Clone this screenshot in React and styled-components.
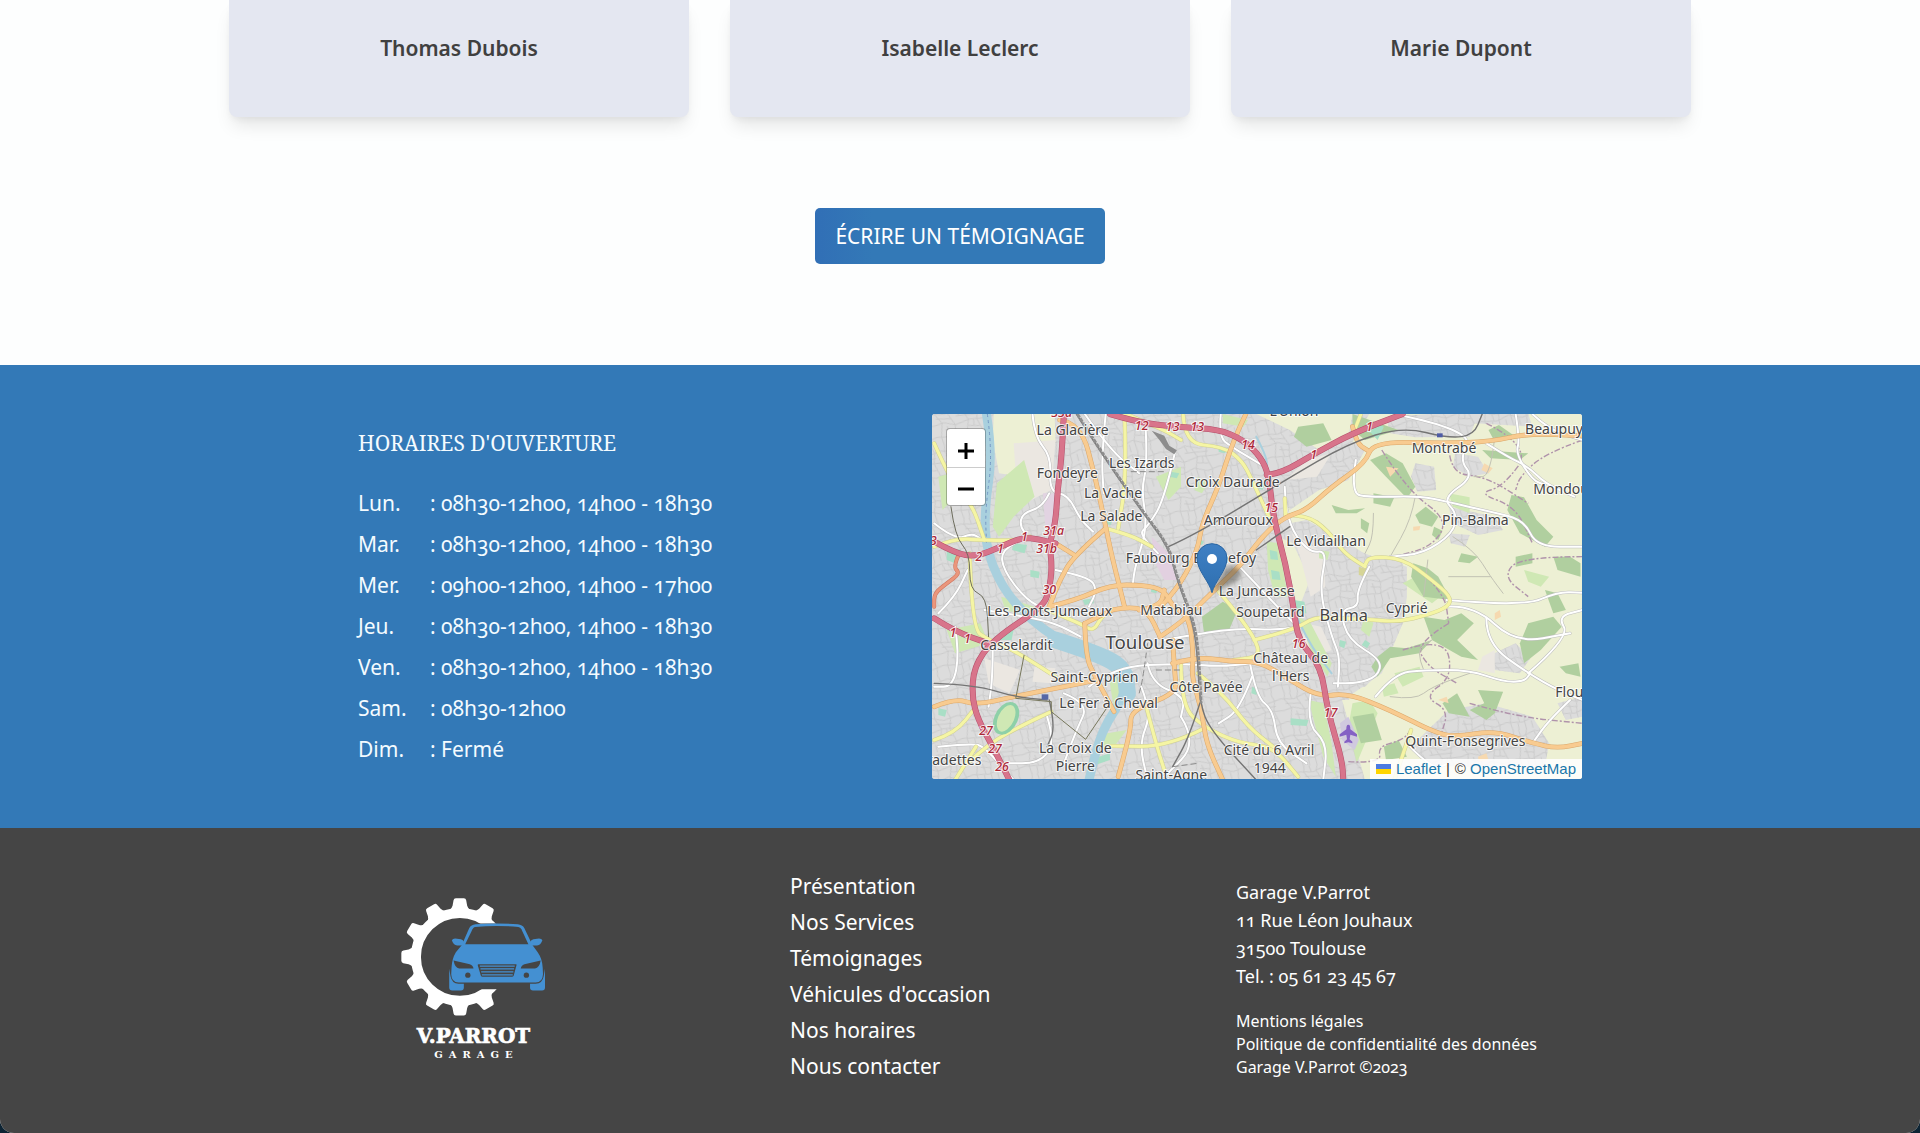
import React from "react";
import styled, { createGlobalStyle } from "styled-components";

const sans = `"Noto Sans", "Open Sans", sans-serif`;
const serif = `"Noto Serif", "Liberation Serif", serif`;
const blue = "#3379b7";

const GlobalStyle = createGlobalStyle`
  *, *::before, *::after { box-sizing: border-box; }
  body {
    margin: 0;
    background: #0d2434;
    color: #404040;
    font-family: ${sans};
    font-variant-numeric: oldstyle-nums;
  }
`;

const Page = styled.div`
  display: flex;
  flex-direction: column;
  min-height: 100vh;
  border-radius: 0 0 14px 14px;
  overflow: hidden;
  background: #fdfefe;
`;

const Testimonials = styled.section`
  display: flex;
  flex-direction: column;
  align-items: center;
  gap: 91px;
  padding: 0 24px 101px;
`;

const CardGrid = styled.div`
  display: grid;
  grid-template-columns: repeat(3, 1fr);
  gap: 41px;
  width: 100%;
  max-width: 1462px;
`;

const Card = styled.article`
  padding: 32px 24px 53px;
  border-radius: 0 0 8px 8px;
  background: #e4e7f1;
  box-shadow: 0 12px 18px -4px rgba(0, 0, 0, 0.1), 0 4px 7px -2px rgba(0, 0, 0, 0.05);
`;

const Author = styled.h3`
  margin: 0;
  font-size: 21px;
  font-weight: 600;
  line-height: 32px;
  text-align: center;
`;

const WriteButton = styled.button`
  padding: 12px 20px;
  border: 0;
  border-radius: 5px;
  background: linear-gradient(90deg, #316fb6, ${blue} 20%);
  color: #fff;
  font: 400 21px/32px ${sans};
  text-transform: uppercase;
  cursor: pointer;
`;

const HoursBand = styled.section`
  padding: 49px 24px;
  background: ${blue};
  color: #f4fbff;
`;

const HoursInner = styled.div`
  display: grid;
  grid-template-columns: 574fr 650fr;
  max-width: 1244px;
  margin: 0 auto;
  padding-left: 20px;
`;

const HoursText = styled.div`
  display: flex;
  flex-direction: column;
  gap: 24px;
  padding-top: 13px;
`;

const HoursTitle = styled.h2`
  margin: 0;
  font: 400 21px/32px ${serif};
  text-transform: uppercase;
`;

const HoursTable = styled.table`
  border-collapse: collapse;
  font-size: 21px;
  line-height: 41px;
  th, td { padding: 0; font-weight: 400; text-align: left; white-space: nowrap; }
  th { width: 72px; }
`;

const MapFrame = styled.div`
  position: relative;
  height: 365px;
  overflow: hidden;
  border-radius: 3px;
  background: #dcdcdc;
`;

const MapDrawing = styled.svg`
  display: block;
  width: 100%;
  height: 100%;
  font-family: ${sans};
  font-variant-numeric: lining-nums;
`;

const ZoomControl = styled.div`
  position: absolute;
  top: 15px;
  left: 15px;
  display: flex;
  flex-direction: column;
  border-radius: 3px;
  background: #fff;
  box-shadow: 0 0 0 1px rgba(0, 0, 0, 0.25);
`;

const ZoomButton = styled.button`
  display: grid;
  place-items: center;
  width: 38px;
  height: 38px;
  padding: 5px 0 0;
  border: 0;
  background: none;
  cursor: pointer;
  & + & { border-top: 1px solid #ccc; }
`;

const Attribution = styled.div`
  position: absolute;
  right: 0;
  bottom: 0;
  display: flex;
  align-items: center;
  gap: 5px;
  padding: 0 6px;
  background: rgba(255, 255, 255, 0.85);
  color: #333;
  font: 15px/20px "Liberation Sans", sans-serif;
  a { color: #1b77aa; text-decoration: none; }
`;

const Footer = styled.footer`
  flex: 1;
  padding: 40px 24px 48px;
  background: #454545;
  color: #fff;
`;

const FooterInner = styled.div`
  display: grid;
  grid-template-columns: 432fr 446fr 346fr;
  align-items: start;
  max-width: 1244px;
  margin: 0 auto;
  padding-left: 20px;
`;

const LogoLink = styled.a`
  justify-self: start;
  padding: 29px 0 0 42px;
  color: #fff;
  svg { display: block; width: 148px; height: 163px; }
`;

const FooterNav = styled.nav`
  display: flex;
  flex-direction: column;
  align-items: start;
  font-size: 21px;
  line-height: 36px;
`;

const FooterLink = styled.a`
  color: inherit;
  text-decoration: none;
`;

const Contact = styled.div`
  display: flex;
  flex-direction: column;
  gap: 20px;
  padding-top: 10px;
  white-space: nowrap;
`;

const Address = styled.address`
  font-size: 18px;
  font-style: normal;
  line-height: 28px;
`;

const Legal = styled.div`
  display: flex;
  flex-direction: column;
  align-items: start;
  font-size: 16px;
  line-height: 23px;
`;

/* ---------- map data, in map units ---------- */

const farmland = [
  "152,12 298,12 300,95 262,130 215,200 165,190 150,90",
  "1010,95 1050,12 1560,12 1560,1110 1060,1110 1010,900 1000,860 1080,790 1130,640 1130,450 1050,440 1000,400 900,330 860,340 850,300 930,230 1010,190",
  "832,380 905,420 905,520 880,600 862,500",
  "985,870 1060,870 1150,960 1150,1110 1040,1110",
  "780,12 1010,12 1000,80 930,120 860,60",
];
const builtUp = [
  "1090,22 1190,12 1310,12 1290,80 1160,82 1100,70",
  "1160,160 1205,170 1210,240 1165,245 1150,200",
  "1255,130 1310,140 1335,190 1290,200 1250,170",
  "1240,290 1350,320 1370,360 1310,375 1250,340",
  "1340,735 1400,700 1435,745 1410,790 1350,780",
  "1190,960 1240,900 1330,880 1440,920 1480,1000 1470,1070 1200,1070 1150,1010",
  "860,380 1000,410 1060,440 1140,470 1140,560 1130,640 1080,780 1040,830 990,840 960,740 915,620 905,500",
  "1020,100 1040,120 1000,210 930,240 860,300 850,220 900,140 980,90",
  "1290,12 1430,12 1440,50 1300,40",
  "1500,880 1560,860 1560,920 1520,930",
  "1240,370 1290,375 1280,410 1245,400",
];
const woods = [
  "1052,150 1090,130 1130,160 1160,230 1140,265 1090,200",
  "1390,255 1420,262 1450,330 1490,380 1470,410 1410,370 1380,300",
  "1155,460 1190,475 1215,500 1245,570 1180,560 1150,500",
  "1160,315 1185,290 1215,320 1200,350 1170,340",
  "1180,620 1230,630 1270,610 1300,640 1260,690 1310,750 1270,740 1200,690",
  "1055,770 1070,740 1100,710 1140,715 1200,690 1170,730 1100,745 1070,800",
  "1430,640 1490,620 1510,650 1460,720 1420,760 1410,700",
  "1310,840 1370,845 1350,910 1330,930 1290,900 1325,880",
  "1225,880 1260,850 1290,920 1240,910",
  "1010,920 1060,910 1080,990 1030,1000",
  "1010,12 1120,60 1040,90 1010,60",
  "880,50 940,40 960,90 900,110 870,80",
  "1320,120 1430,130 1410,150 1340,145",
  "650,620 700,575 735,600 715,660 655,670",
  "1400,440 1440,430 1440,460 1400,470",
  "1490,440 1530,440 1555,460 1555,500 1500,480",
  "1060,250 1110,262 1100,290 1060,280",
  "1470,540 1500,550 1520,600 1490,610",
  "1085,1010 1120,990 1140,1040 1090,1050",
  "1205,350 1225,362 1215,390 1200,375",
  "960,285 1000,300 1040,295 1020,310 970,310",
  "1030,325 1050,340 1045,370 1030,355",
  "1335,60 1360,45 1400,80 1350,95",
  "1270,430 1310,440 1290,460 1262,455",
  "1505,770 1550,760 1555,800 1520,790",
];
const meadows = [
  "160,220 225,150 250,260 200,320 165,380 150,350",
  "805,395 835,400 855,560 825,560 808,480",
  "880,620 910,640 960,760 950,800 910,720",
  "905,870 940,880 960,1000 970,1100 940,1040",
  "1010,880 1050,870 1070,910 1020,1060 1000,950",
  "540,200 600,170 600,230 570,270",
  "430,820 455,780 470,860 440,900",
  "40,660 120,640 140,700 60,730",
  "170,560 250,590 240,620 180,600",
  "400,975 470,960 440,1010 410,1020",
  "1130,520 1160,500 1220,560 1200,580",
  "1110,790 1170,770 1180,800 1130,830",
  "1240,250 1290,262 1290,310 1250,290",
  "700,12 760,30 750,50 700,40",
  "20,200 50,190 60,260 30,300",
  "1080,830 1110,820 1120,850 1085,860",
  "1420,480 1480,500 1460,530 1430,515",
  "930,420 955,425 950,450 930,445",
  "640,200 665,220 650,250 632,240",
  "1040,610 1060,640 1050,680 1030,660",
];
const pale = [
  "900,150 960,130 925,200 850,210",
  "865,370 905,400 940,430 945,530 910,560 885,440",
  "895,640 935,650 960,720 920,740 890,690",
  "130,745 215,780 190,850 140,820",
  "200,100 300,90 290,240 210,290",
  "250,770 300,775 290,820 245,815",
  "1320,740 1350,720 1350,790 1310,780",
];
const fields = [
  "1090,170 1120,175 1100,200",
  "1155,350 1172,348 1170,360 1155,362",
  "1325,160 1345,175 1335,190 1318,180",
  "1350,610 1362,600 1365,620 1350,630",
  "1310,1040 1330,1030 1335,1050 1312,1055",
  "1215,870 1235,860 1240,880",
];
const ponds = [
  "40,410 75,420 60,460 40,450",
  "812,420 830,425 832,450 814,448",
  "815,480 835,485 838,510 818,508",
  "575,185 596,190 590,205 572,200",
  "200,400 232,405 226,430 196,420",
  "165,670 200,660 195,690 165,690",
  "870,570 895,575 900,610 878,612",
  "862,925 905,930 900,948 862,945",
  "380,1050 430,1030 430,1050 395,1065",
  "240,480 262,485 260,505 240,500",
  "1040,690 1052,700 1045,715 1032,705",
  "780,215 800,225 795,240 778,232",
  "640,385 655,395 650,405 638,400",
  "365,570 390,565 392,580 370,585",
  "690,110 710,120 705,130 690,125",
  "770,830 785,840 780,855 768,850",
  "980,690 995,695 990,715 978,708",
  "420,330 435,335 432,345 420,342",
  "20,895 40,900 36,920 20,915",
  "530,530 545,540 540,550 528,545",
  "1038,60 1065,40 1085,50 1070,90 1055,70",
];
const minor = [
  "245,12 250,80 290,140 285,245 330,255 360,330 390,365",
  "285,250 270,290 220,310 215,350 235,380 170,420 175,480 230,570 280,600",
  "420,12 410,140 415,250",
  "515,40 520,160 505,240 520,350 490,470 485,520",
  "585,130 560,270 520,350 500,370 545,430",
  "695,12 690,80 720,110 800,170",
  "740,470 830,590 870,640",
  "1018,150 1005,250 1050,262 1170,258 1235,275 1340,305 1420,330 1450,410 1560,410",
  "1110,12 1300,60 1265,150 1300,200 1225,265 1260,310 1250,370 1180,430 1100,440",
  "1330,100 1380,140 1430,170 1470,220 1540,260",
  "1400,12 1410,90 1400,130 1440,210 1470,225",
  "1440,12 1480,60 1560,90",
  "848,230 850,330 905,430 950,420 930,540 960,680 980,740 975,830",
  "1050,470 1020,540 1025,590 980,600 1000,690 1080,750 1070,800 1020,820 965,820",
  "1235,590 1300,585 1400,700 1530,670",
  "1330,625 1330,700 1430,790 1500,840 1560,870",
  "1235,570 1420,590 1500,545 1560,548",
  "1430,790 1530,680 1500,620 1560,600",
  "1065,860 1110,790 1180,780 1290,780 1370,815 1420,815 1435,790",
  "1530,870 1480,930 1440,1000",
  "1140,1000 1200,1080 1240,1060",
  "130,600 230,620 300,640 360,680",
  "60,650 70,730 55,830 10,830",
  "150,700 150,800 140,890",
  "380,830 440,770 600,760 690,770 770,760",
  "520,760 530,820 610,860 600,920",
  "560,690 650,670 740,655 830,660 880,650",
  "320,850 380,880 350,960 320,1060",
  "20,1010 100,1000 130,1010 200,1110",
  "280,920 300,1000 260,1060 180,1060",
  "765,760 780,860 820,900 830,1000 900,1060",
  "770,800 740,900 690,940",
  "910,850 900,940 950,1000 940,1110",
  "505,830 530,910 500,1000 520,1110",
  "600,920 640,1000 560,1100",
  "10,340 60,390 100,370 120,385",
  "370,12 430,120 500,190",
  "20,610 60,560 90,480",
  "300,480 380,500 400,540 380,590",
];
const lanes = [
  "1060,310 1060,380 1040,430",
  "1160,260 1150,330 1100,440",
  "1190,450 1180,560",
  "1250,380 1300,420 1340,500 1370,550",
  "1100,860 1160,870 1200,830 1290,790",
  "1340,500 1240,500",
  "1180,780 1160,720 1200,690",
  "1350,80 1340,200 1300,200",
];
const yellow = [
  "605,12 608,100 700,110 745,150 770,210 810,320",
  "465,12 470,200 450,355",
  "10,410 60,385 120,390 200,392 240,380",
  "10,100 60,240 100,280 130,390",
  "420,355 480,375 530,410",
  "690,545 715,580 775,680 790,740 725,750",
  "775,690 870,660 920,620 990,625 1060,630 1120,635 1190,615 1240,590 1245,560 1200,510 1130,445 1050,440 1040,465",
  "850,315 900,315 950,360 990,430 1040,470",
  "848,265 850,315",
  "95,430 100,655 140,690 200,720 300,800",
  "280,600 360,640 390,665 410,620 435,600",
  "600,760 600,890 660,955 740,1000 820,1010 880,1100",
  "640,790 700,850 760,950 820,1010",
  "655,955 570,1010 430,1008",
  "515,880 540,1000 560,1080",
  "10,990 60,970 110,890",
  "90,1060 140,1000 230,940 290,905",
  "60,1110 110,1010",
  "1150,960 1110,1110",
  "470,12 500,30 560,60 600,90",
  "1030,12 1015,60",
];
const orange = [
  "755,12 725,90 690,230 650,340 640,420 600,520 545,600",
  "310,30 360,40 395,200 420,350 435,440 465,590",
  "420,355 345,435 310,510 285,590",
  "285,590 350,570 430,525 510,525 560,540 580,590 620,620 630,740 625,800 650,900 660,1000 700,1110",
  "435,600 470,590 520,600 550,680",
  "550,680 600,640 680,540 740,470 800,370 850,320 900,300 960,230 1040,160 1060,95 1230,100 1340,95 1430,70 1560,78",
  "1010,50 1020,100 1045,120",
  "370,640 372,740 395,800 440,905",
  "370,640 435,600",
  "10,890 60,865 110,885 200,860 320,830 400,810",
  "580,690 585,790 590,850 480,900 480,960 450,1100",
  "580,760 640,740 720,755 790,755 860,810 930,860 1000,850 1100,900 1210,970 1260,980 1350,962 1440,1000 1500,1015 1560,1000",
  "500,600 550,590 560,540",
  "300,400 345,435",
];
const motorway = [
  "320,12 315,140 305,240 300,340 285,400 292,470 285,540 270,590 150,690 105,770 100,860 115,930 150,1010 190,1110",
  "10,625 60,665 140,700",
  "10,395 60,430 110,440 170,410 220,382 260,388 300,400",
  "430,12 500,38 600,52 690,58 750,90 790,140 810,195 820,320 850,460 870,600 880,690 935,770 950,900 985,1050 988,1110",
  "805,195 840,190 920,130 1010,70 1130,12",
];
const coral = ["70,430 55,470 72,490 40,520 10,550 10,590"];
const rails = [
  "350,12 420,150 510,310 570,410 590,510 630,640 640,750 645,880 670,960 780,1110",
  "570,410 640,370 850,210 1000,100 1130,50 1240,85 1300,75 1320,12",
  "645,880 620,980 580,1070",
  "10,820 110,825 200,860 280,870",
  "285,870 300,950 280,1010",
  "780,420 860,350",
];
const tracks = ["50,290 60,380 95,430 95,540 135,560 140,680"];
const river = [
  "135,12 150,130 130,300 135,430 190,570 300,690 400,730 460,770 470,850 410,960 380,1110",
];
const canals = ["780,80 810,150 800,190", "940,820 975,1000 985,1110", "870,600 900,690 960,790"];
const borders = [
  "1330,40 1440,110 1370,230 1310,250 1400,290 1440,400",
  "1240,100 1240,190 1330,200 1430,280",
  "1080,120 1140,240 1240,330 1200,410 1110,440",
  "1560,90 1470,130 1410,200 1400,240",
  "1560,440 1410,440 1370,500 1430,560",
  "1130,720 1230,680 1250,800 1180,860 1240,900 1220,980",
  "1240,640 1160,700 1190,770 1260,820",
  "1290,880 1400,920 1560,940",
  "1000,1055 1080,1060 1070,1010 1130,990 1150,960",
  "1170,480 1230,550 1240,640",
];

const places = [
  ["La Glacière", 428, 76], ["Les Izards", 635, 174], ["Fondeyre", 412, 203],
  ["La Vache", 549, 263], ["La Salade", 544, 332], ["Croix Daurade", 908, 232],
  ["Amouroux", 925, 345], ["Le Vidailhan", 1188, 408], ["Montrabé", 1542, 130],
  ["Beaupuy", 1872, 73], ["Pin-Balma", 1636, 344], ["Faubourg Bonnefoy", 783, 458],
  ["La Juncasse", 980, 558], ["Les Ponts-Jumeaux", 359, 617], ["Matabiau", 724, 615],
  ["Soupetard", 1021, 620], ["Cyprié", 1430, 609], ["Casselardit", 259, 720],
  ["Saint-Cyprien", 493, 815], ["Le Fer à Cheval", 536, 894], ["Côte Pavée", 828, 846],
  ["Château de", 1082, 759], ["l'Hers", 1082, 814], ["La Croix de", 436, 1028],
  ["Pierre", 436, 1082], ["Cité du 6 Avril", 1017, 1034], ["1944", 1019, 1088],
  ["Saint-Agne", 724, 1110], ["Quint-Fonsegrives", 1606, 1008], ["L'Union", 1092, 19],
];
const cutPlaces = [["Mondouzil", 1810, 252], ["Flourens", 1876, 861]];
const exits = [
  ["12", 635, 60], ["13", 728, 64], ["13", 802, 64], ["14", 954, 116], ["1", 1318, 64],
  ["1", 1151, 148], ["15", 1024, 306], ["31a", 371, 376], ["31b", 350, 430], ["1", 283, 394],
  ["1", 211, 428], ["2", 147, 452], ["3", 10, 404], ["30", 358, 552], ["1", 69, 682],
  ["1", 112, 698], ["16", 1106, 715], ["17", 1202, 922], ["27", 168, 976], ["27", 195, 1030],
  ["26", 216, 1084], ["33a", 395, 22],
];

const toPath = (points) => {
  const p = points.split(" ").map((pair) => pair.split(",").map(Number));
  let d = `M${p[0]}`;
  for (let i = 1; i < p.length - 1; i++) {
    d += ` Q${p[i]} ${(p[i][0] + p[i + 1][0]) / 2},${(p[i][1] + p[i + 1][1]) / 2}`;
  }
  return `${d} L${p[p.length - 1]}`;
};

const Lines = ({ items, color, casing, width, dash }) => (
  <g fill="none" strokeLinecap={dash ? "butt" : "round"} strokeLinejoin="round">
    {casing && items.map((l) => (
      <path key={`c${l}`} d={toPath(l)} stroke={casing} strokeWidth={width + 1} vectorEffect="non-scaling-stroke" />
    ))}
    {items.map((l) => (
      <path key={l} d={toPath(l)} stroke={color} strokeWidth={width} strokeDasharray={dash} vectorEffect="non-scaling-stroke" />
    ))}
  </g>
);

const Areas = ({ items, fill, overlay }) => (
  <g>
    {items.map((a) => <polygon key={a} points={a} fill={fill} />)}
    {overlay && items.map((a) => <polygon key={`o${a}`} points={a} fill={overlay} />)}
  </g>
);

const CityMap = () => (
  <MapDrawing viewBox="6 12 1950 1095" preserveAspectRatio="xMidYMid slice" role="img" aria-label="Carte de Toulouse">
    <defs>
      <pattern id="streets" width="128" height="112" patternUnits="userSpaceOnUse" patternTransform="rotate(-12)">
        <path
          d="M0 14 L30 20 62 8 94 22 128 14 M0 50 L24 44 50 56 86 46 128 50 M0 84 L40 90 70 78 100 92 128 84 M12 0 L8 17 20 45 10 86 12 112 M44 0 L38 18 50 56 44 89 44 112 M76 0 L74 14 84 46 74 80 76 112 M108 0 L112 18 104 48 112 88 108 112 M8 30 L44 36 M56 30 L112 34 M24 66 L48 72 M80 64 L106 70 M60 90 L60 112 M92 90 L92 112 M28 90 L26 112 M24 0 L26 18 M60 10 L64 30 M96 48 L94 66 M30 56 L32 88"
          fill="none" stroke="#c6c6c6" strokeWidth="2"
        />
      </pattern>
      <linearGradient id="pin" x1="0" y1="0" x2="0" y2="1">
        <stop offset="0" stopColor="#3f80c4" />
        <stop offset="1" stopColor="#2e6fb0" />
      </linearGradient>
      <filter id="soft"><feGaussianBlur stdDeviation="7" /></filter>
    </defs>
    <g transform="scale(1.255 1)">
      <rect width="1560" height="1122" fill="#dcdcdc" />
      <rect width="1560" height="1122" fill="url(#streets)" />
      <Areas items={farmland} fill="#edf0d4" />
      <Areas items={builtUp} fill="#dcdcdc" overlay="url(#streets)" />
      <Areas items={pale} fill="#ebe7e1" />
      <Areas items={meadows} fill="#cfe8b4" />
      <Areas items={woods} fill="#b0cf9f" />
      <Areas items={fields} fill="#f6d9b0" />
      <Areas items={ponds} fill="#a9dfc6" />
      <polygon points="530,380 570,430 590,510 560,510 535,450" fill="#e2d0e0" />
      <polygon points="270,250 300,250 296,340 276,360" fill="#e2d3e2" />
      <polygon points="980,940 1000,920 1025,990 1015,1020 985,990" fill="#d0c9df" />
      <polygon points="1025,470 1050,480 1042,500 1025,495" fill="#d6d596" />
      <Lines items={river} color="#a9d0de" width={9} />
      <Lines items={["300,690 400,730 465,775 472,850"]} color="#a9d0de" width={17} />
      <Lines items={canals} color="#a9d0de" width={2} />
      <Lines items={["137,12 150,130 132,300 135,400"]} color="#7597c4" width={1} dash="3 3" />
      <Lines items={borders} color="#b093ab" width={1.4} dash="6 2 2 2" />
      <Lines items={lanes} color="#c2c2b4" width={1} />
      <Lines items={minor} color="#ffffff" casing="#bdbdbd" width={2} />
      <Lines items={yellow} color="#f5f5a4" casing="#cfcf95" width={3.2} />
      <ellipse cx="182" cy="925" rx="24" ry="46" transform="rotate(18 182 925)" fill="#cfe8b4" stroke="#8ed0a8" strokeWidth="9" />
      <Lines items={orange} color="#f8cb90" casing="#dba76a" width={3.8} />
      <Lines items={coral} color="#ea967c" casing="#cc735e" width={3} />
      <Lines items={motorway} color="#d8748b" casing="#b4506c" width={5} />
      <Lines items={rails} color="#747474" width={1.4} />
      <Lines items={["352,12 422,150 512,310 572,410 592,510 633,640 643,750 648,880"]} color="#8d8d8d" width={3} dash="4 1" />
      <Lines items={tracks} color="#6c6c5c" width={1} />
      <polyline points="225,735 215,800 205,865 290,875 290,905 372,988 430,880" fill="none" stroke="#77775c" strokeWidth="1" vectorEffect="non-scaling-stroke" />
      <Lines items={["520,700 510,800 500,850", "480,185 560,185", "540,780 600,780", "580,1070 640,1060"]} color="#8a8a8a" width={1} dash="6 3" />
      <path d="M530 62l30 15 12 30 18 14-6 12-20-16-16-28z" fill="#8d8d8d" />
    </g>
    <rect x="335" y="853" width="20" height="16" fill="#5567a6" />
    <rect x="1521" y="70" width="17" height="12" fill="#4e5ba5" />
    <path d="M1255 944c5 0 6 6 6 14l20 15v7l-20-6-2 14 8 7v5l-12-3-12 3v-5l8-7-2-14-20 6v-7l20-15c0-8 1-14 6-14z" fill="#8461c4" />
    <g textAnchor="middle" fill="#444" stroke="#fff" strokeOpacity="0.8" strokeWidth="6" strokeLinejoin="round" paintOrder="stroke" fontSize="42">
      {places.map(([name, x, y]) => <text key={name} x={x} y={y}>{name}</text>)}
      <text x="1241" y="634" fontSize="49">Balma</text>
      <text x="645" y="717" fontSize="56">Toulouse</text>
    </g>
    <g fill="#444" stroke="#fff" strokeOpacity="0.8" strokeWidth="6" paintOrder="stroke" fontSize="42">
      {cutPlaces.map(([name, x, y]) => <text key={name} x={x} y={y}>{name}</text>)}
      <text x="154" y="1066" textAnchor="end">Pradettes</text>
    </g>
    <g textAnchor="middle" fill="#ab2636" stroke="#fff" strokeOpacity="0.8" strokeWidth="6" paintOrder="stroke" fontSize="37" fontStyle="italic" fontWeight="500">
      {exits.map(([n, x, y]) => <text key={`${n}-${x}`} x={x} y={y}>{n}</text>)}
    </g>
    <path d="M848 546L880 484q20-24 42-10 24 16-8 44z" fill="#3c3a30" opacity="0.45" filter="url(#soft)" />
    <path d="M846 548C838 514 801 482 801 444a45 43 0 0 1 90 0C891 482 854 514 846 548z" fill="url(#pin)" stroke="#2b66a3" strokeWidth="3" />
    <circle cx="846" cy="447" r="15" fill="#fff" />
  </MapDrawing>
);

const Logo = () => (
  <svg viewBox="60 50 445 490" role="img" aria-label="V.Parrot Garage">
    <defs>
      <clipPath id="gearCut">
        <path d="M0 0H570V130H250V327H570V570H0Z" />
      </clipPath>
    </defs>
    <g clipPath="url(#gearCut)" fill="#fff">
      <circle cx="240" cy="230" r="132" fill="none" stroke="#fff" strokeWidth="30" />
      {[30, 0, -30, -60, -90, -120, -150, 180, 150].map((angle) => (
        <path key={angle} transform={`translate(240 230) rotate(${angle})`} d="M-32-140Q-24-146-22-154L-19-170Q-18-176-12-176H12Q18-176 19-170L22-154Q24-146 32-140Z" />
      ))}
    </g>
    <g fill="#4490d2">
      <path d="M287 132Q350 127 414 132Q428 133 434 144L458 194L474 216Q488 236 489 262L490 282Q489 306 468 307H236Q215 306 214 282L215 262Q216 236 228 216L246 194L268 144Q274 133 287 132Z" />
      <path d="M216 180Q218 175 226 175L243 177Q250 178 253 186L254 196H232Q220 194 216 180Z" />
      <path d="M488 180Q486 175 478 175L461 177Q454 178 451 186L450 196H472Q484 194 488 180Z" />
      <path d="M208 266L212 288Q216 310 236 311H252V322Q252 331 243 331H217Q208 331 208 322Z" />
      <path d="M496 266L492 288Q488 310 468 311H451V322Q451 331 460 331H487Q496 331 496 322Z" />
    </g>
    <g fill="#454545">
      <path d="M285 140Q350 134 416 140Q422 141 425 147L446 192H256L278 147Q281 141 285 140Z" />
      <path d="M221 241L270 252Q280 256 281 265H238Q225 264 221 241Z" />
      <path d="M483 241L434 252Q424 256 423 265H466Q479 264 483 241Z" />
      <circle cx="264" cy="285" r="8" />
      <circle cx="440" cy="285" r="8" />
      <path d="M296 252H409Q412 252 410 256L402 286Q401 290 396 290H309Q304 290 303 286L294 256Q293 252 296 252Z" />
    </g>
    <path d="M300 258H405M302 266H403M304 275H401M306 284H399" stroke="#4490d2" strokeWidth="4" />
    <g fill="#fff" stroke="#fff" textAnchor="middle" fontFamily='"DejaVu Serif", serif' fontWeight="700">
      <text x="281" y="488" fontSize="60" strokeWidth="2">V.PARROT</text>
      <text x="290" y="533" fontSize="30" letterSpacing="18" strokeWidth="0">GARAGE</text>
    </g>
  </svg>
);

const authors = ["Thomas Dubois", "Isabelle Leclerc", "Marie Dupont"];
const fullDay = "08h30-12h00, 14h00 - 18h30";
const hours = [
  ["Lun.", fullDay],
  ["Mar.", fullDay],
  ["Mer.", "09h00-12h00, 14h00 - 17h00"],
  ["Jeu.", fullDay],
  ["Ven.", fullDay],
  ["Sam.", "08h30-12h00"],
  ["Dim.", "Fermé"],
];
const links = ["Présentation", "Nos Services", "Témoignages", "Véhicules d'occasion", "Nos horaires", "Nous contacter"];

export default function App() {
  return (
    <>
      <GlobalStyle />
      <Page>
        <Testimonials>
          <CardGrid>
            {authors.map((name) => (
              <Card key={name}><Author>{name}</Author></Card>
            ))}
          </CardGrid>
          <WriteButton type="button">Écrire un témoignage</WriteButton>
        </Testimonials>

        <HoursBand>
          <HoursInner>
            <HoursText>
              <HoursTitle>Horaires d'ouverture</HoursTitle>
              <HoursTable>
                <tbody>
                  {hours.map(([day, time]) => (
                    <tr key={day}>
                      <th scope="row">{day}</th>
                      <td>: {time}</td>
                    </tr>
                  ))}
                </tbody>
              </HoursTable>
            </HoursText>
            <MapFrame>
              <CityMap />
              <ZoomControl>
                <ZoomButton type="button" aria-label="Zoom avant">
                  <svg width="18" height="18" viewBox="0 0 18 18"><path d="M9 1v16M1 9h16" stroke="#000" strokeWidth="3" /></svg>
                </ZoomButton>
                <ZoomButton type="button" aria-label="Zoom arrière">
                  <svg width="18" height="18" viewBox="0 0 18 18"><path d="M1 9h16" stroke="#000" strokeWidth="3" /></svg>
                </ZoomButton>
              </ZoomControl>
              <Attribution>
                <svg width="15" height="10" viewBox="0 0 15 10" aria-hidden="true">
                  <path d="M0 0h15v5H0z" fill="#4c7be1" />
                  <path d="M0 5h15v5H0z" fill="#ffd500" />
                </svg>
                <a href="#leaflet">Leaflet</a>
                <span>|</span>
                <span>© <a href="#osm">OpenStreetMap</a></span>
              </Attribution>
            </MapFrame>
          </HoursInner>
        </HoursBand>

        <Footer>
          <FooterInner>
            <LogoLink href="#accueil"><Logo /></LogoLink>
            <FooterNav>
              {links.map((label) => <FooterLink key={label} href="#">{label}</FooterLink>)}
            </FooterNav>
            <Contact>
              <Address>
                Garage V.Parrot<br />
                11 Rue Léon Jouhaux<br />
                31500 Toulouse<br />
                Tel. : 05 61 23 45 67
              </Address>
              <Legal>
                <FooterLink href="#">Mentions légales</FooterLink>
                <FooterLink href="#">Politique de confidentialité des données</FooterLink>
                <span>Garage V.Parrot ©2023</span>
              </Legal>
            </Contact>
          </FooterInner>
        </Footer>
      </Page>
    </>
  );
}
